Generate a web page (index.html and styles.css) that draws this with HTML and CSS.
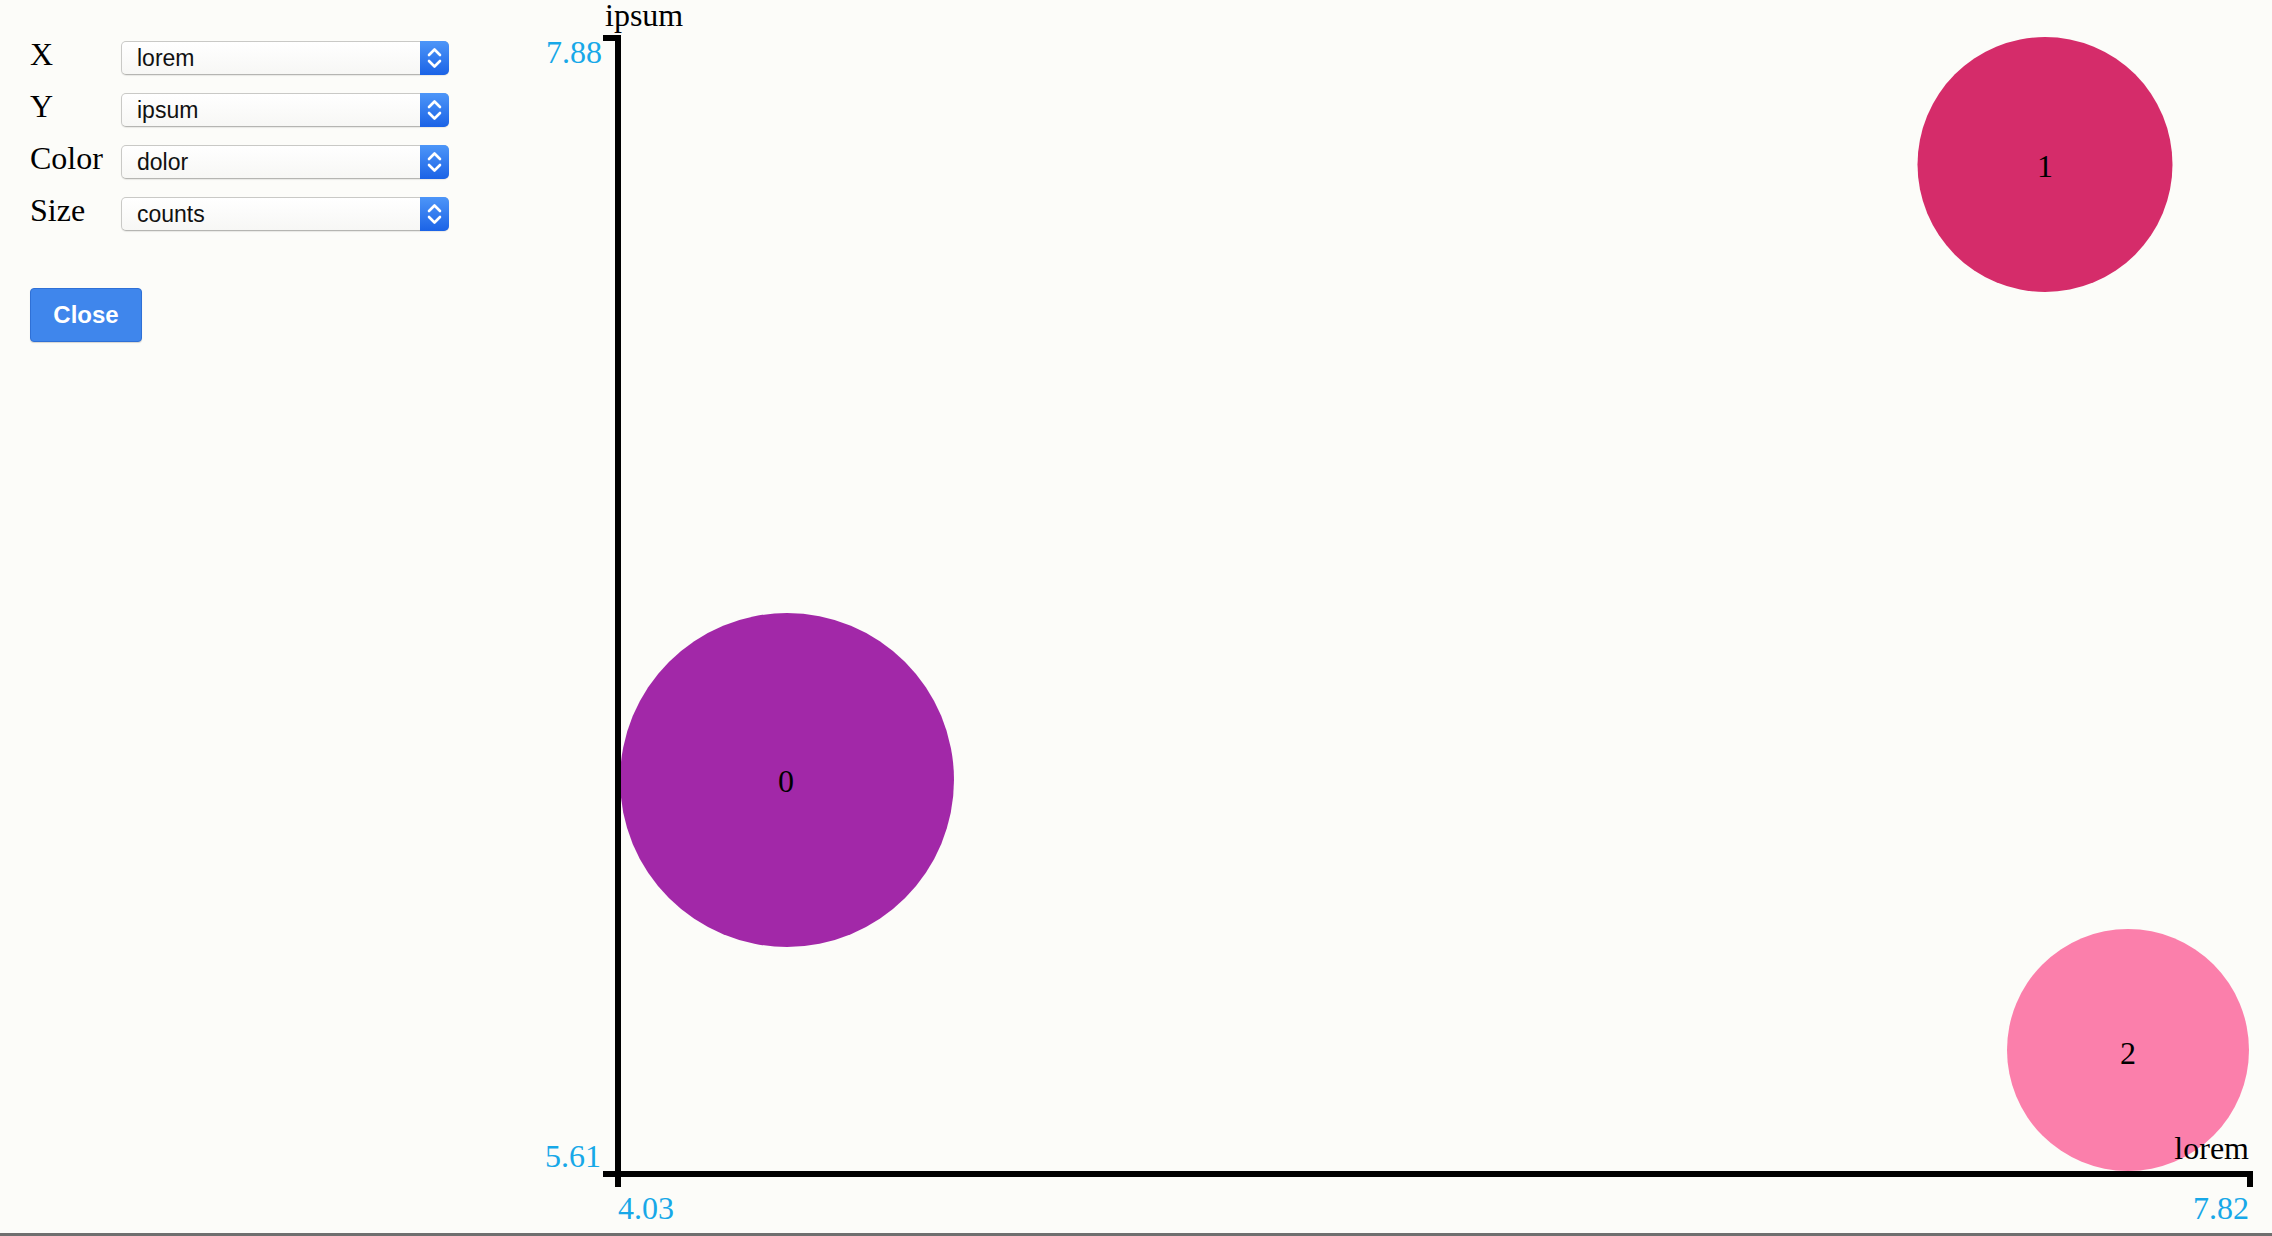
FILE: index.html
```html
<!DOCTYPE html>
<html lang="en">
<head>
<meta charset="utf-8">
<title>Scatter</title>
<link rel="stylesheet" href="styles.css">
</head>
<body>
<div class="page">
  <div class="main">
    <div class="panel">
      <div class="controls">
        <div class="label">X</div>
        <div class="select"><span class="value">lorem</span><span class="stepper"><svg viewBox="0 0 29 34" width="29" height="34"><path d="M9 14 L14.5 8.5 L20 14 M9 20 L14.5 25.5 L20 20" /></svg></span></div>
        <div class="label">Y</div>
        <div class="select"><span class="value">ipsum</span><span class="stepper"><svg viewBox="0 0 29 34" width="29" height="34"><path d="M9 14 L14.5 8.5 L20 14 M9 20 L14.5 25.5 L20 20" /></svg></span></div>
        <div class="label">Color</div>
        <div class="select"><span class="value">dolor</span><span class="stepper"><svg viewBox="0 0 29 34" width="29" height="34"><path d="M9 14 L14.5 8.5 L20 14 M9 20 L14.5 25.5 L20 20" /></svg></span></div>
        <div class="label">Size</div>
        <div class="select"><span class="value">counts</span><span class="stepper"><svg viewBox="0 0 29 34" width="29" height="34"><path d="M9 14 L14.5 8.5 L20 14 M9 20 L14.5 25.5 L20 20" /></svg></span></div>
      </div>
      <button class="close-btn" type="button">Close</button>
    </div>
    <svg class="chart" viewBox="460 0 1812 1233" width="1812" height="1233">
      <circle class="dot dot-0" cx="787" cy="780" r="167"></circle>
      <circle class="dot dot-1" cx="2045" cy="164.5" r="127.5"></circle>
      <circle class="dot dot-2" cx="2128" cy="1050" r="121"></circle>
      <text class="dot-label" x="786" y="792">0</text>
      <text class="dot-label" x="2045" y="177">1</text>
      <text class="dot-label" x="2128" y="1064">2</text>
      <path class="axis" d="M603 38 H618 V1174 H603 M618 1187 V1174 H2250 V1187"></path>
      <text class="axis-title" x="605" y="26">ipsum</text>
      <text class="axis-title end" x="2249" y="1159">lorem</text>
      <text class="tick end" x="602" y="63">7.88</text>
      <text class="tick end" x="601" y="1167">5.61</text>
      <text class="tick" x="618" y="1219">4.03</text>
      <text class="tick end" x="2249" y="1219">7.82</text>
    </svg>
  </div>
  <div class="bottom-bar"></div>
</div>
</body>
</html>
```
FILE: styles.css
```css
html, body {
  margin: 0;
  padding: 0;
}
body {
  background: #fcfcf9;
  width: 2272px;
  height: 1236px;
  overflow: hidden;
  font-family: "Liberation Serif", "Times New Roman", serif;
}
.page {
  display: flex;
  flex-direction: column;
  height: 1236px;
}
.main {
  display: flex;
  flex-direction: row;
  height: 1233px;
}
.panel {
  width: 460px;
  box-sizing: border-box;
  padding: 41px 0 0 30px;
  display: flex;
  flex-direction: column;
  align-items: flex-start;
}
.controls {
  display: grid;
  grid-template-columns: 91px 328px;
  row-gap: 18px;
  align-items: center;
}
.label {
  align-self: start;
  font-family: "Liberation Serif", "Times New Roman", serif;
  font-size: 32px;
  line-height: 26px;
  color: #000;
}
.select {
  height: 34px;
  box-sizing: border-box;
  border: 1px solid #c9c9c6;
  border-bottom-color: #b5b5b2;
  border-radius: 5px;
  background: linear-gradient(#ffffff, #f7f7f5);
  display: flex;
  align-items: center;
  box-shadow: 0 1px 1px rgba(0,0,0,0.08);
}
.value {
  flex: 1;
  padding-left: 15px;
  font-family: "Liberation Sans", Arial, sans-serif;
  font-size: 23px;
  color: #111;
}
.stepper {
  align-self: stretch;
  width: 29px;
  margin: -1px -1px -1px 0;
  border-radius: 0 5px 5px 0;
  background: linear-gradient(#4d96f8, #1b63e6);
  display: flex;
  align-items: center;
  justify-content: center;
}
.stepper svg {
  display: block;
}
.stepper path {
  fill: none;
  stroke: #fff;
  stroke-width: 2.6;
  stroke-linecap: round;
  stroke-linejoin: round;
}
.close-btn {
  margin-top: 57px;
  width: 112px;
  height: 54px;
  box-sizing: border-box;
  background: #3f86ec;
  border: 1px solid #2f70d6;
  border-radius: 4px;
  color: #fff;
  font-family: "Liberation Sans", Arial, sans-serif;
  font-weight: bold;
  font-size: 24px;
  padding: 0;
  box-shadow: 0 1px 1px rgba(0,0,0,0.15);
}
.chart {
  display: block;
  flex: none;
}
.dot-0 { fill: #a228a8; }
.dot-1 { fill: #d52c6a; }
.dot-2 { fill: #fb7fab; }
.dot-label {
  font-family: "Liberation Serif", "Times New Roman", serif;
  font-size: 32px;
  fill: #000;
  text-anchor: middle;
}
.axis {
  fill: none;
  stroke: #000;
  stroke-width: 6;
  stroke-linejoin: miter;
}
.axis-title {
  font-family: "Liberation Serif", "Times New Roman", serif;
  font-size: 32px;
  fill: #000;
}
.tick {
  font-family: "Liberation Serif", "Times New Roman", serif;
  font-size: 32px;
  fill: #17a8e8;
}
.end {
  text-anchor: end;
}
.bottom-bar {
  height: 3px;
  background: #6f6f6f;
}
```
